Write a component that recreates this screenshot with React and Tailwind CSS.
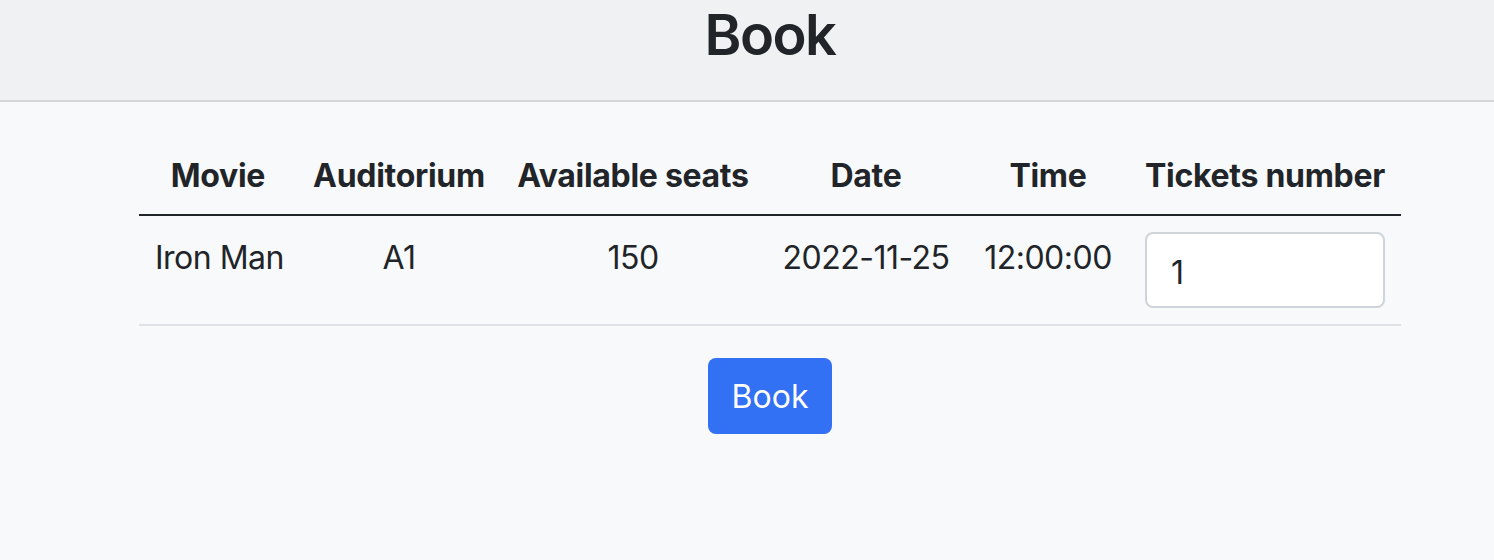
export default function App() {
  const font = { fontFamily: 'Inter, "Noto Sans", sans-serif' };
  return (
    <div className="min-h-[560px] bg-[#f8f9fa] text-[#212529]" style={font}>
      <header className="h-[102px] bg-[#f0f1f3] border-b-2 border-[#d5d6d8] flex justify-center pl-[46px]">
        <h1 className="text-[56px] font-semibold leading-[67px] pt-[2px] tracking-[-1.5px]">Book</h1>
      </header>
      <div className="flex flex-col items-center pt-[32px] pl-[46px]">
        <table className="table-fixed border-collapse w-[1262px] text-[32px] leading-[48px]">
          <colgroup>
            <col className="w-[158px]" />
            <col className="w-[204px]" />
            <col className="w-[264px]" />
            <col className="w-[202px]" />
            <col className="w-[162px]" />
            <col className="w-[272px]" />
          </colgroup>
          <thead>
            <tr className="border-b-2 border-[#212529]">
              {["Movie", "Auditorium", "Available seats", "Date", "Time", "Tickets number"].map((h) => (
                <th key={h} className="px-4 pt-[18px] pb-[14px] font-bold text-center whitespace-nowrap tracking-[-0.3px]">{h}</th>
              ))}
            </tr>
          </thead>
          <tbody>
            <tr className="border-b-2 border-[#dee2e6]">
              {["Iron Man", "A1", "150", "2022-11-25", "12:00:00"].map((v) => (
                <td key={v} className="px-4 pt-[18px] pb-4 align-top text-center whitespace-nowrap tracking-[-0.5px]">{v}</td>
              ))}
              <td className="p-4 align-top">
                <input
                  type="number"
                  defaultValue="1"
                  className="block w-full h-[76px] px-[24px] pt-[14px] pb-[10px] bg-white border-2 border-[#ced4da] rounded-[8px] text-[32px] leading-[48px] outline-none"
                  style={font}
                />
              </td>
            </tr>
          </tbody>
        </table>
        <button className="mt-[32px] h-[76px] px-[24px] pt-[2px] rounded-[8px] bg-[#3270f4] text-white text-[32px] leading-[48px]">
          Book
        </button>
      </div>
    </div>
  );
}
